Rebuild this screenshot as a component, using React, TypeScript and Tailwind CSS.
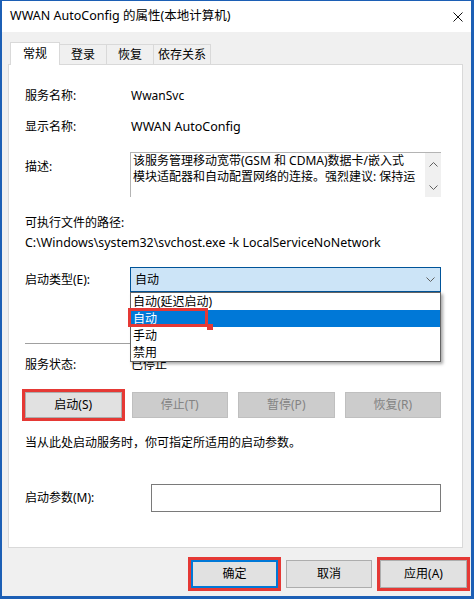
import { ReactNode } from "react";

const FONT = "font-['Noto_Sans','Noto_Sans_CJK_SC',sans-serif]";

const Label = ({ children }: { children: ReactNode }) => (
  <div className="w-[106px] shrink-0">{children}</div>
);

const Chevron = ({ up = false }: { up?: boolean }) => (
  <svg width="9" height="5" viewBox="0 0 9 5" className="block">
    <polyline
      points={up ? "0.5,4.5 4.5,0.5 8.5,4.5" : "0.5,0.5 4.5,4.5 8.5,0.5"}
      fill="none"
      stroke="#606060"
      strokeWidth="1"
    />
  </svg>
);

export default function App() {
  const options = ["自动(延迟启动)", "自动", "手动", "禁用"];

  return (
    <div className={`w-[475px] h-[600px] bg-white text-[12px] text-black ${FONT}`}>
      <div className="w-[474px] h-[599px] flex flex-col border-t border-l-2 border-r-[3px] border-b-[3px] border-[#1c5fb5] bg-[#f0f0f0]">
        {/* Title bar */}
        <div className="h-[31px] shrink-0 bg-white flex items-center justify-between pl-[8px] pr-[8px]">
          <span className="text-[12.5px] leading-none">WWAN AutoConfig 的属性(本地计算机)</span>
          <svg width="10" height="10" viewBox="0 0 10 10">
            <path d="M0.5 0.5 L9.5 9.5 M9.5 0.5 L0.5 9.5" stroke="#111" strokeWidth="1" />
          </svg>
        </div>

        {/* Tabs */}
        <div className="pt-[10px] pl-[8px] h-[32px] flex items-end shrink-0">
          <div className="relative z-10 -mb-px w-[50px] h-[23px] bg-white border border-b-0 border-[#d9d9d9] flex items-center justify-center pb-[1px]">
            常规
          </div>
          {["登录", "恢复", "依存关系"].map((t, i) => (
            <div
              key={t}
              className={`h-[20px] border-t border-r border-[#d9d9d9] flex items-center justify-center ${
                i === 2 ? "w-[57px]" : "w-[47px]"
              }`}
            >
              {t}
            </div>
          ))}
        </div>

        {/* Panel */}
        <div className="ml-[6px] w-[455px] h-[484px] shrink-0 bg-white border border-[#d9d9d9] pl-[16px] pr-[21px] flex flex-col">
          <div className="mt-[22px] h-[18px] leading-[18px] flex">
            <Label>服务名称:</Label>
            <span>WwanSvc</span>
          </div>
          <div className="mt-[13px] h-[18px] leading-[18px] flex">
            <Label>显示名称:</Label>
            <span className="text-[12.5px]">WWAN AutoConfig</span>
          </div>
          <div className="mt-[16px] flex">
            <div className="w-[105px] shrink-0 pt-[6px] leading-[18px]">描述:</div>
            <div className="w-[311px] h-[45px] flex border-l border-t border-[#b4b4b4]">
              <div className="flex-1 pl-[2px] leading-[16px] whitespace-nowrap overflow-hidden">
                <div>该服务管理移动宽带(GSM 和 CDMA)数据卡/嵌入式</div>
                <div>模块适配器和自动配置网络的连接。强烈建议: 保持运</div>
              </div>
              <div className="w-[16px] bg-[#f0f0f0] flex flex-col items-center justify-between pt-[9px] pb-[7px]">
                <Chevron up />
                <Chevron />
              </div>
            </div>
          </div>
          <div className="mt-[17px] h-[18px] leading-[18px]">可执行文件的路径:</div>
          <div className="mt-[2px] h-[18px] leading-[18px] whitespace-nowrap text-[12.4px]">
            {"C:\\Windows\\system32\\svchost.exe -k LocalServiceNoNetwork"}
          </div>

          {/* Startup type */}
          <div className="mt-[15px] flex items-center">
            <div className="w-[105px] shrink-0">启动类型(E):</div>
            <div className="relative w-[311px] h-[25px] bg-[#cce4f7] border border-[#005499] flex items-center justify-between pl-[4px] pr-[5px]">
              <span>自动</span>
              <Chevron />
              {/* Open dropdown list */}
              <div className="absolute left-[-1px] top-[24px] w-[311px] z-20 bg-white border border-[#646464] shadow-[2px_2px_3px_rgba(0,0,0,0.35)]">
                {options.map((o, i) => (
                  <div
                    key={o}
                    className={`h-[17px] leading-[17px] pl-[2px] ${
                      i === 1 ? "bg-[#0078d7] text-white" : ""
                    }`}
                  >
                    {o}
                  </div>
                ))}
                <div className="absolute left-[-3px] top-[15px] w-[80px] h-[19px] border-[3px] border-[#e53935]" />
                <div className="absolute left-[76px] top-[31px] w-[6px] h-[6px] bg-[#e53935]" />
              </div>
            </div>
          </div>

          <div className="mt-[51px] h-px bg-[#a0a0a0] w-[416px]" />

          <div className="mt-[12px] h-[18px] leading-[18px] flex">
            <Label>服务状态:</Label>
            <span>已停止</span>
          </div>

          {/* Service buttons */}
          <div className="mt-[18px] grid grid-cols-4 gap-[10px] w-[416px]">
            <button className="h-[26px] bg-[#e1e1e1] border border-[#adadad] outline-[3px] outline-solid outline-[#e53935]">
              启动(S)
            </button>
            {["停止(T)", "暂停(P)", "恢复(R)"].map((b) => (
              <button
                key={b}
                className="h-[26px] bg-[#cccccc] border border-[#bfbfbf] text-[#838383]"
              >
                {b}
              </button>
            ))}
          </div>

          <div className="mt-[16px] h-[18px] leading-[18px] whitespace-nowrap">
            当从此处启动服务时，你可指定所适用的启动参数。
          </div>

          <div className="mt-[32px] flex items-center">
            <div className="w-[126px] shrink-0">启动参数(M):</div>
            <div className="w-[290px] h-[28px] bg-white border border-[#7a7a7a]" />
          </div>
        </div>

        {/* Dialog buttons */}
        <div className="mt-[12px] flex justify-end gap-[8px] pr-[4px]">
          <button className="w-[87px] h-[28px] bg-[#e1e1e1] border-2 border-[#0078d7] outline-[3px] outline-solid outline-[#e53935]">
            确定
          </button>
          <button className="w-[86px] h-[28px] bg-[#e1e1e1] border border-[#adadad]">取消</button>
          <button className="w-[87px] h-[28px] bg-[#e1e1e1] border border-[#adadad] outline-[3px] outline-solid outline-[#e53935]">
            应用(A)
          </button>
        </div>
      </div>
    </div>
  );
}
